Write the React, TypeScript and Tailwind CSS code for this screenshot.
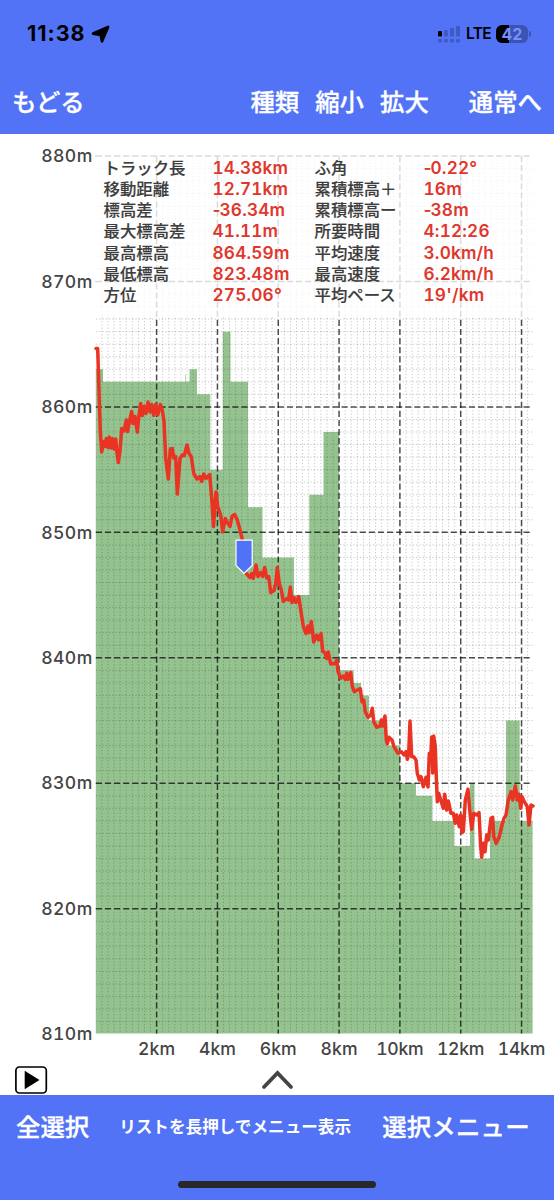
import type { ReactNode } from "react";

const FONT = "font-[Inter,'Noto_Sans_CJK_JP',sans-serif]";

// Chart geometry
const LEFT = 95.8;
const RIGHT = 532.6;
const TOP = 156;
const BOTTOM = 1033.6;
const KM = 30.41;
const METER = 12.545;

const yOf = (m: number) => 406.9 + (860 - m) * METER;
const xOf = (km: number) => LEFT + km * KM;

// Ground elevation: [start x, metres]
const ground: [number, number][] = [
  [95.8, 863],
  [103, 862],
  [185, 862.6],
  [185.6, 862],
  [189.5, 863],
  [197, 861],
  [210.3, 855],
  [222.7, 866],
  [230.5, 862],
  [248, 852],
  [262.5, 848],
  [294, 845],
  [309.3, 853],
  [323.5, 858],
  [339, 839],
  [353.7, 838],
  [361, 837],
  [369, 835],
  [386, 833],
  [400, 830],
  [416, 829],
  [432.5, 827],
  [454.3, 825],
  [470, 830],
  [474.5, 824],
  [490, 827],
  [506, 835],
  [519.7, 827],
];

// Recorded GPS track
const track = [
  "96,348.6 97.7,348.6 99,391 100.3,431 101.7,452 103.5,441.5 105,446.5 106.3,438.5 108.3,447.5 109.3,437 111,448 112.3,438.5 114,449 115.7,439 116.7,450 118.3,462.5 120,451 121.7,428.5 124,431 126.3,420 127.7,431.5 129,423.5 131.7,411.5 133,423.5 135,416.5 137.3,432 139,415 140.7,403.5 142.3,415.5 144.3,406.5 146,413.5 148,402 150,412 151.7,404.5 153.7,415.5 155.7,404.5 157.7,415 160.3,404.5 162.3,410 164,421.5 165.7,458 168.3,479 170.3,449 172.3,448.5 173.7,458 175.7,456.5 177.3,494 180,458.5 182.3,455 184.3,455.5 187,445 189,453.5 191.3,456.5 193.7,473.5",
  "197,479 199.7,476.5 201.7,481.5 203.7,474 206,478.5 209.7,474.5 211.7,498 213.5,526.5 216,492 217.7,506.5 220.7,515 222.7,532 225.3,518.5 228,523.5 230,526.5 232,516.5 234.7,514.5 237.3,520 240,530 242,538 243.3,570 246.7,574 250,577.5 251.7,573.5 253.3,578.5 256,565 258,576.5 260.7,572.5 262.7,576.5 264.7,567.5 266.7,578 268.7,576.5 270.7,592.5 274,590.5 275.7,583.5 277.3,567.5 279.3,583.5 281.3,590 283.3,601.5 286.7,598.5 288.7,600 290.3,587 292,602.5 294,597.5 296,602.5 298.7,596.5 301.3,613.5 303.3,626.5 306,633.5 308,626 309.3,632.5 311.3,621.5 313.7,642 316.7,635 318.7,640 321,633.5 322.7,651.5 324.7,652.5 326.7,658.5 328.3,652 330.7,664 335.3,663.5 336.7,660 338,671.5",
  "340.7,678.3 343.3,676 345.3,679.3 346.7,673.3 348,679.3 350.7,672.7 352.3,686.7 354.3,691.7 357.3,690 360.3,688.7 362,701.7 363.7,700 365.3,711.7 368,717.3 370.7,715 372.3,708.3 373.7,721.7 376.7,727.3 380,726 381.3,720 382.7,726 385,716 386.3,740 387.3,744 389,737.3 392,740 394,746.7 398,753.3 401.3,751.7 404,755 406,751.7 407.3,759.3 408.7,753.3 410,721 411.7,756.7 413.7,756.7 416,760 417.3,773.3 419.3,780 421,776.7 423.3,786.7 426,777.3 428,787 429.3,753.3 431,752.7 431.7,737 432.7,773 433.7,736 435.3,746.7 436.3,776.7 437.3,801.7 438.7,793.3 440.7,800 443.3,808.3 444.7,794.3 446.7,810 448.3,801 451,813.3 453.3,813.3 455.3,823.3 456.7,815 459.3,826.7 460.7,815 462,832.7 463.3,831.7 465.3,800 468,789.3 469.7,810 471.7,829.3 473.7,813.3 476.7,815 479,812.7 480.7,846.7 481.7,857.3 483.3,843.3 485,851.7 486.7,835 488.3,840 491,818.3 492.7,817.3 493.7,836.7 496.3,843.3 499.3,836.7 502,825 504,818.3 506,815 508.3,800 511,791.7 512.7,800 515.3,786 517.3,800 519,794.3 520.7,808.3 522,796.7 524.3,801.7 527.3,806.7 529,825 531,805 533,806",
].join(" ");

const stats = [
  ["トラック長", "14.38km", "ふ角", "-0.22°"],
  ["移動距離", "12.71km", "累積標高＋", "16m"],
  ["標高差", "-36.34m", "累積標高ー", "-38m"],
  ["最大標高差", "41.11m", "所要時間", "4:12:26"],
  ["最高標高", "864.59m", "平均速度", "3.0km/h"],
  ["最低標高", "823.48m", "最高速度", "6.2km/h"],
  ["方位", "275.06°", "平均ペース", "19'/km"],
];

function groundPath() {
  let d = `M${LEFT} ${BOTTOM}`;
  ground.forEach(([x, m], i) => {
    const end = i + 1 < ground.length ? ground[i + 1][0] : RIGHT;
    d += `L${x} ${yOf(m)}L${end} ${yOf(m)}`;
  });
  return `${d}L${RIGHT} ${BOTTOM}Z`;
}

function StatusBar() {
  return (
    <div className="flex h-[68px] items-center pl-[27px] pr-[23px] text-black">
      <span className="w-[59px] whitespace-nowrap text-[21.5px] font-bold leading-none tracking-[1px]">11:38</span>
      <svg className="ml-[5px]" width="19" height="19" viewBox="0 0 18 18">
        <path
          d="M16.2 1.8 10.4 15.4 9.2 9.4 2 8.1Z"
          fill="black"
          stroke="black"
          strokeWidth="2.6"
          strokeLinejoin="round"
        />
      </svg>
      <svg className="ml-auto" width="24" height="18" viewBox="0 0 24 18">
        <rect x="1" y="6" width="4" height="5.5" rx="1.2" />
        <g fill="#405ac2">
          <rect x="7" y="5" width="4" height="6.5" rx="1.2" />
          <rect x="13" y="3" width="4" height="8.5" rx="1.2" />
          <rect x="19" y="1" width="4" height="10.5" rx="1.2" />
          <rect x="1" y="14" width="4" height="3.5" rx="1.2" />
          <rect x="7" y="14" width="4" height="3.5" rx="1.2" />
          <rect x="13" y="14" width="4" height="3.5" rx="1.2" />
          <rect x="19" y="14" width="4" height="3.5" rx="1.2" />
        </g>
      </svg>
      <span className="ml-[5px] w-[24px] whitespace-nowrap text-[15.5px] font-semibold leading-none tracking-[-0.6px]">
        LTE
      </span>
      <div className="ml-[6px] flex items-center">
        <div className="flex h-[18px] w-8 items-center justify-center rounded-[6px] bg-[linear-gradient(to_right,#000_42%,#3b53b5_42%)] text-[16px] font-bold leading-none text-[#7890f7]">
          42
        </div>
        <div className="ml-px h-[6px] w-[2px] rounded-r-full bg-[#3b53b5]" />
      </div>
    </div>
  );
}

function BarButton({ children, className = "" }: { children: ReactNode; className?: string }) {
  return (
    <button
      type="button"
      className={`whitespace-nowrap text-[24.4px] font-medium leading-none text-white [-webkit-text-stroke:0.3px_white] ${className}`}
    >
      {children}
    </button>
  );
}

function Chart() {
  const minorX = Array.from({ length: 72 }, (_, i) => i).filter((i) => i % 10 !== 0);
  const minorY = Array.from({ length: 70 }, (_, i) => 811 + i).filter((m) => m % 10 !== 0);
  const majorX = [2, 4, 6, 8, 10, 12, 14];
  const majorY = [820, 830, 840, 850, 860, 870, 880];

  return (
    <svg className="block" width="554" height="961" viewBox="0 134 554 961">
      <path d={groundPath()} fill="#95c38f" />
      {/* 200m / 1m grid */}
      <g stroke="#000" strokeOpacity="0.27" strokeWidth="0.8" strokeDasharray="1.3 2">
        {minorX.map((i) => (
          <line key={i} x1={xOf(i / 5)} x2={xOf(i / 5)} y1={TOP} y2={BOTTOM} />
        ))}
        {minorY.map((m) => (
          <line key={m} x1={LEFT} x2={RIGHT} y1={yOf(m)} y2={yOf(m)} />
        ))}
      </g>
      {/* 2km / 10m grid */}
      <g stroke="#000" strokeOpacity="0.7" strokeWidth="1.5" strokeDasharray="6.2 2.9">
        {majorX.map((k) => (
          <line key={k} x1={xOf(k)} x2={xOf(k)} y1={TOP} y2={BOTTOM} />
        ))}
        {majorY.map((m) => (
          <line key={m} x1={LEFT} x2={RIGHT} y1={yOf(m)} y2={yOf(m)} />
        ))}
      </g>
      <polyline
        points={track}
        fill="none"
        stroke="#e93424"
        strokeWidth="3.5"
        strokeLinejoin="round"
        strokeLinecap="round"
      />
      <path d="M236 540.2H252.2V565.5L244 573.5L236 565.5Z" fill="#5172f4" stroke="#fff" strokeWidth="1.2" />
      <g className="tabular-nums" fill="#444" fontSize="17.6" fontWeight="500">
        {[810, ...majorY].map((m) => (
          <text key={m} x="92.3" y={yOf(m) + 6.2} textAnchor="end" textLength={51}>
            {m}m
          </text>
        ))}
        {majorX.map((k) => (
          <text key={k} x={xOf(k)} y="1055" textAnchor="middle" textLength={k < 10 ? 37 : 47.5}>
            {k}km
          </text>
        ))}
      </g>
      <path
        d="M264 1087 277.5 1073 291 1087"
        fill="none"
        stroke="#444"
        strokeWidth="3.8"
        strokeLinecap="round"
      />
      <rect x="15.9" y="1067" width="30.4" height="26" rx="3.5" fill="#fff" stroke="#000" strokeWidth="1.7" />
      <path d="M24.7 1070.7V1089.3L39.5 1080Z" />
    </svg>
  );
}

function StatValue({ children, className = "" }: { children: string; className?: string }) {
  // The tabular minus is too wide, so signed values get tightened up front
  const signed = children.startsWith("-");
  return (
    <span
      className={`-mt-px text-[17.2px] font-semibold tabular-nums tracking-[0.2px] text-[#e0362c] ${className}`}
    >
      {signed && <span className="proportional-nums tracking-[-1px]">-</span>}
      {signed ? children.slice(1) : children}
    </span>
  );
}

function StatsPanel() {
  return (
    <div className="absolute left-[96px] top-[17px] h-[166px] w-[438px] bg-white/80 pl-[7.5px] pt-[6.6px] text-[16.4px] font-medium">
      {stats.map(([label, value, label2, value2]) => (
        <div key={label} className="flex h-[21.15px] items-center whitespace-nowrap leading-none">
          <span className="w-[109px] text-[#3d3d3d] [-webkit-text-stroke:0.15px_#3d3d3d]">{label}</span>
          <StatValue className="w-[102px]">{value}</StatValue>
          <span className="w-[109px] text-[#3d3d3d] [-webkit-text-stroke:0.15px_#3d3d3d]">{label2}</span>
          <StatValue>{value2}</StatValue>
        </div>
      ))}
    </div>
  );
}

export default function App() {
  return (
    <div className={`flex h-[1200px] w-[554px] flex-col overflow-hidden bg-white ${FONT}`}>
      <header className="h-[134px] bg-[#5273f5]">
        <StatusBar />
        <nav className="flex h-[68px] items-center pl-[12px] pr-[12px]">
          <BarButton>もどる</BarButton>
          <div className="ml-auto flex items-center gap-4">
            <BarButton>種類</BarButton>
            <BarButton>縮小</BarButton>
            <BarButton>拡大</BarButton>
          </div>
          <BarButton className="ml-[40px]">通常へ</BarButton>
        </nav>
      </header>

      <main className="relative h-[961px]">
        <Chart />
        <StatsPanel />
      </main>

      <footer className="h-[105px] bg-[#5273f5]">
        <div className="flex h-16 items-center pl-4">
          <BarButton>全選択</BarButton>
          <span className="ml-[30px] w-[263px] whitespace-nowrap text-[16.6px] font-bold leading-none text-white">
            リストを長押しでメニュー表示
          </span>
          <BarButton className="tracking-[0.2px]">選択メニュー</BarButton>
        </div>
        <div className="mx-auto mt-[22px] h-[7px] w-[198px] rounded-full bg-[#282828]" />
      </footer>
    </div>
  );
}
